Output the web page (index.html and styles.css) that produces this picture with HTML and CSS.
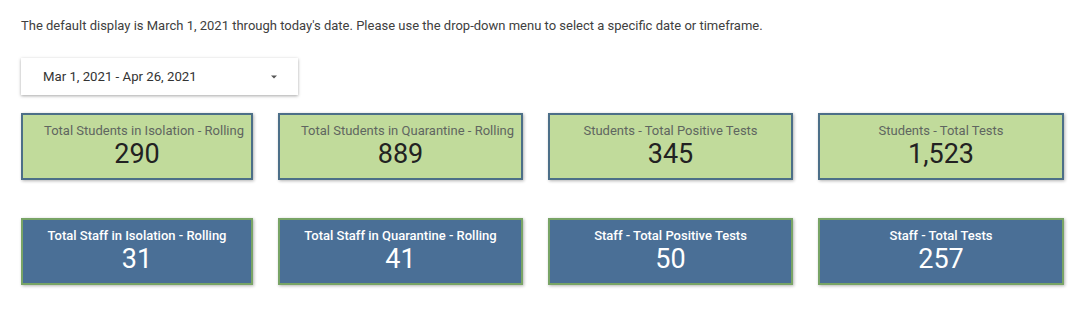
FILE: index.html
```html
<!DOCTYPE html>
<html lang="en">
<head>
<meta charset="utf-8">
<title>Dashboard</title>
<link rel="stylesheet" href="styles.css">
</head>
<body>
<div class="page">
  <p class="intro">The default display is March 1, 2021 through today's date. Please use the drop-down menu to select a specific date or timeframe.</p>
  <div class="dropdown">
    <span class="dropdown-label">Mar 1, 2021 - Apr 26, 2021</span>
    <svg class="caret" width="8" height="4" viewBox="0 0 8 4"><path d="M1 0.5 L7 0.5 L4 3.5 Z" fill="#555"/></svg>
  </div>
  <div class="cards">
    <div class="card student shift"><div class="card-title">Total Students in Isolation - Rolling</div><div class="card-value">290</div></div>
    <div class="card student shift"><div class="card-title">Total Students in Quarantine - Rolling</div><div class="card-value">889</div></div>
    <div class="card student"><div class="card-title">Students - Total Positive Tests</div><div class="card-value">345</div></div>
    <div class="card student"><div class="card-title">Students - Total Tests</div><div class="card-value">1,523</div></div>
  </div>
  <div class="cards staff-row">
    <div class="card staff"><div class="card-title">Total Staff in Isolation - Rolling</div><div class="card-value">31</div></div>
    <div class="card staff"><div class="card-title">Total Staff in Quarantine - Rolling</div><div class="card-value">41</div></div>
    <div class="card staff"><div class="card-title">Staff - Total Positive Tests</div><div class="card-value">50</div></div>
    <div class="card staff"><div class="card-title">Staff - Total Tests</div><div class="card-value">257</div></div>
  </div>
</div>
</body>
</html>
```
FILE: styles.css
```css
* { box-sizing: border-box; }
html, body { margin: 0; padding: 0; background: #fff; }
body { font-family: Roboto, "Liberation Sans", Arial, sans-serif; }
.page { padding: 17px 0 0 21px; width: 1080px; height: 313px; }
.intro { margin: 0; font-size: 13px; line-height: 17px; color: #404040; }
.dropdown {
  margin-top: 24px;
  width: 277px; height: 37px;
  display: flex; align-items: center; justify-content: space-between;
  padding: 0 20px 0 22px;
  background: #fff;
  box-shadow: 0 1px 3px rgba(0,0,0,0.35);
}
.dropdown-label { font-size: 13.2px; color: #333; }
.caret { display: block; }
.cards {
  display: grid;
  grid-template-columns: 232px 245px 245px 246px;
  column-gap: 25px;
  margin-top: 18px;
}
.staff-row { margin-top: 38px; }
.card {
  height: 67px;
  display: flex; flex-direction: column; align-items: center;
  padding-top: 8px;
  box-shadow: 1px 1px 3px rgba(0,0,0,0.3);
}
.card.shift .card-title { margin-left: 14px; }
.student { background: #c1db9b; border: 2px solid #4c6f88; }
.staff { background: #4a6f96; border: 2px solid #78a466; }
.card-title { font-size: 13px; line-height: 15px; white-space: nowrap; }
.card-value { font-size: 27px; line-height: 30px; margin-top: 1px; }
.student .card-title { color: #5f6660; }
.student .card-value { color: #222; }
.staff .card-title { color: #fff; font-weight: 500; }
.staff .card-value { color: #fff; }
```
